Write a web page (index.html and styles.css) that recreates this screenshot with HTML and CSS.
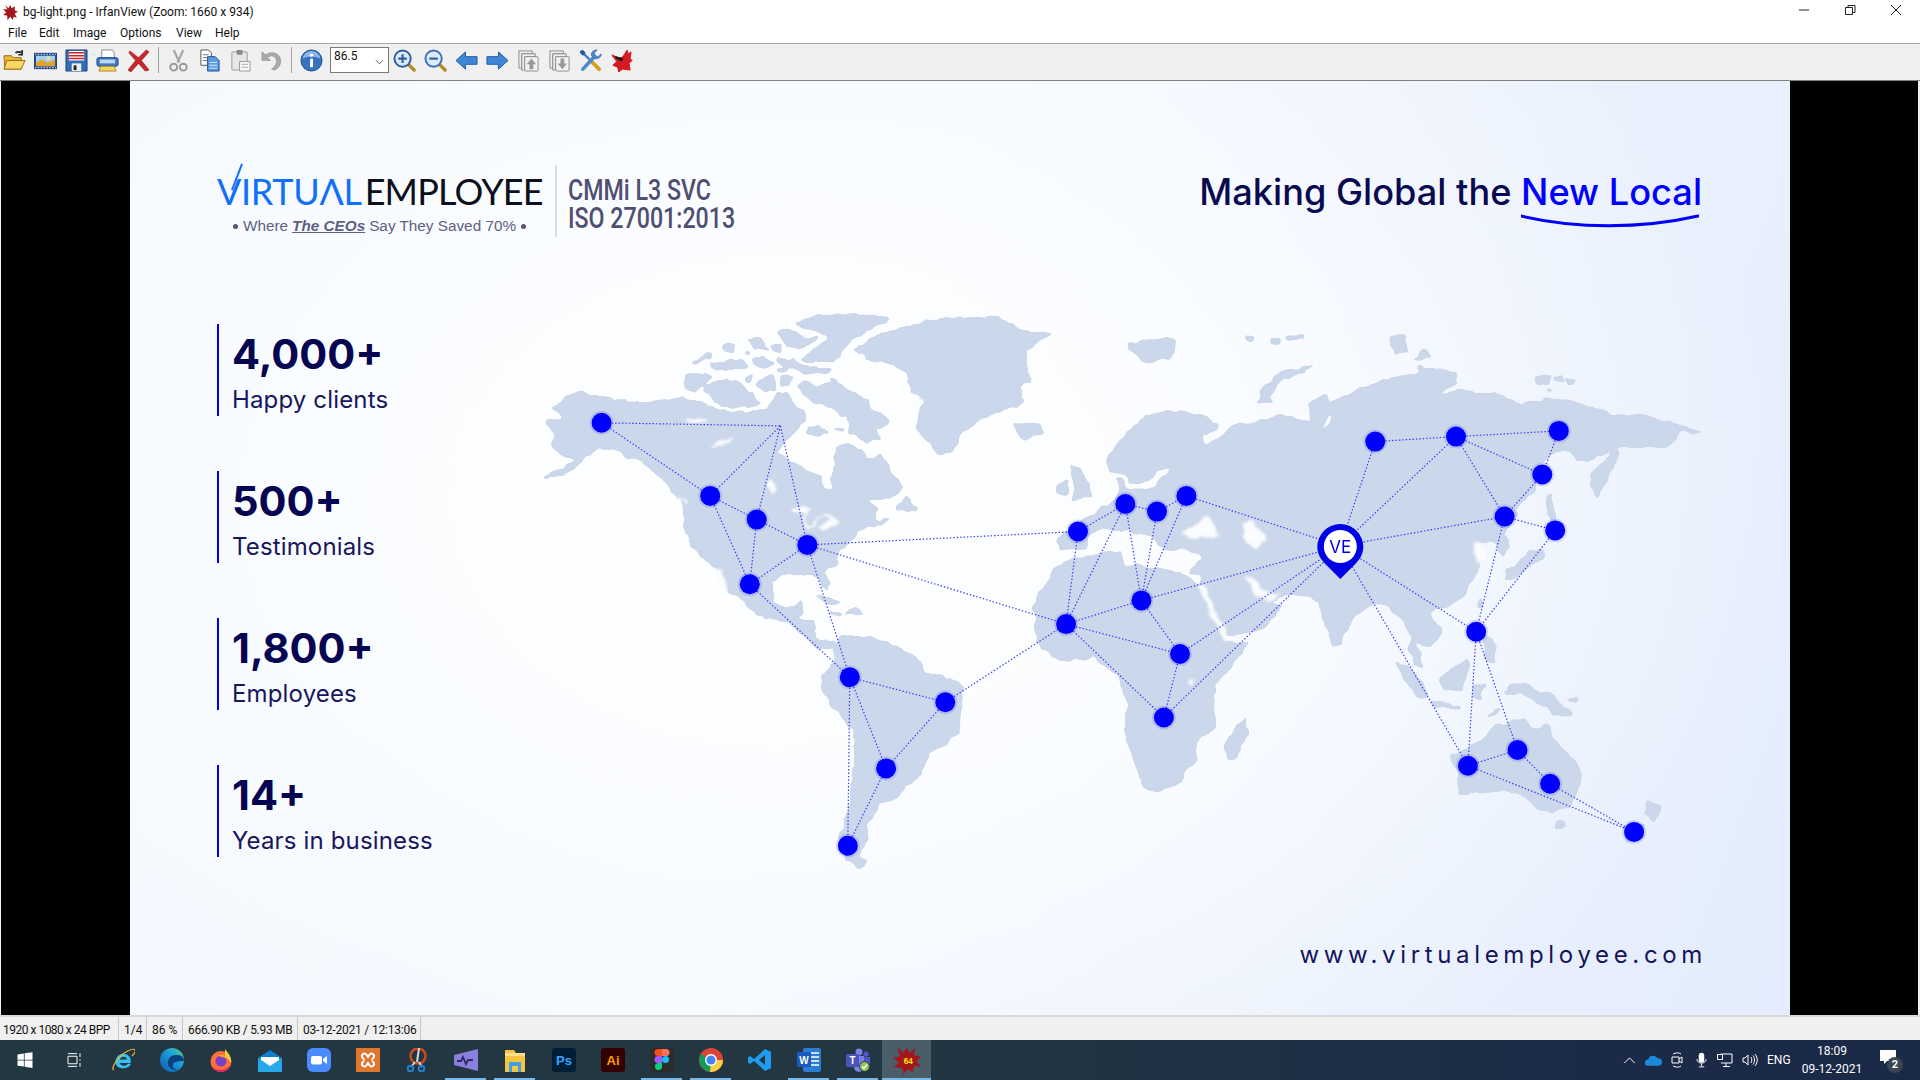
FILE: index.html
```html
<!DOCTYPE html>
<html lang="en">
<head>
<meta charset="utf-8">
<title>bg-light.png - IrfanView</title>
<link rel="stylesheet" href="styles.css">
</head>
<body>
<div class="app">
  <header class="window-head">
    <div class="caption">
      <svg class="app-icon" viewBox="0 0 16 16"><path fill="#a3161b" d="M3 1l3 3 2-3 1 3 3-2 0 4 3 1-3 2 2 4-3-1-1 3-2-3-3 3 0-4-4-1 3-2-3-3 4 0z"/></svg>
      <span class="caption-text">bg-light.png - IrfanView (Zoom: 1660 x 934)</span>
      <div class="win-controls">
        <svg viewBox="0 0 46 12"><path d="M0 6h10" stroke="#222" fill="none"/></svg>
        <svg viewBox="0 0 46 12"><path d="M.5 3.5h7v7h-7zM3 3V1.500h7v7H8" stroke="#222" fill="none"/></svg>
        <svg viewBox="0 0 46 12"><path d="M0 1l10 10M10 1L0 11" stroke="#222" fill="none"/></svg>
      </div>
    </div>
    <nav class="menu"><span>File</span><span>Edit</span><span>Image</span><span>Options</span><span>View</span><span>Help</span></nav>
  </header>

  <div class="toolbar">
    <svg class="tool" viewBox="0 0 24 24"><path d="M1 7h8l2 2h8v12H2z" fill="#e9b93a" stroke="#9a6d10"/><path d="M4 12h19l-4 9H1z" fill="#f8d766" stroke="#9a6d10"/><path d="M13 4c3-2 5-1 7 0M20 1v5h-4" stroke="#222" stroke-width="1.600" fill="none"/></svg>
    <svg class="tool" viewBox="0 0 24 24"><rect y="4" width="24" height="17" fill="#1c4486"/><rect x="2" y="7" width="20" height="11" fill="#a8d0ea"/><path d="M2 14l6-3 6 3 8-3v7H2z" fill="#e2a22f"/><circle cx="15" cy="9.500" r="1.800" fill="#ffe98a"/><path d="M1 5.500h22M1 19.500h22" stroke="#fff" stroke-dasharray="1.500 1.500"/></svg>
    <svg class="tool" viewBox="0 0 24 24"><path d="M1 1h22v22H1z" fill="#2f6db5" stroke="#1c4486"/><rect x="4" y="2" width="16" height="10" fill="#fff"/><path d="M4 4h16M4 7h16M4 10h16" stroke="#c9252b" stroke-width="1.500"/><rect x="7" y="15" width="10" height="8" fill="#eee"/><rect x="9" y="17" width="3" height="5" fill="#222"/></svg>
    <svg class="tool" viewBox="0 0 24 24"><path d="M6 1h11l2 3v6H6z" fill="#fff" stroke="#889"/><rect x="1" y="9" width="22" height="9" rx="2" fill="#3d79c4" stroke="#1c4486"/><rect x="4" y="11" width="16" height="4" fill="#bcd6f3"/><path d="M5 18h14l2 5H3z" fill="#f5d562" stroke="#a98a1f"/></svg>
    <svg class="tool" viewBox="0 0 24 24"><path d="M3 2l9 7 8-8 3 2-8 9 8 10-4 1-7-8-8 9-3-2 8-10-7-8z" fill="#c8262b" stroke="#8c1416" stroke-width=".6"/></svg>
    <i class="sep sep-a"></i>
    <svg class="tool" viewBox="0 0 24 24"><path d="M7 1l6 13M17 1l-6 13" stroke="#a8aaa8" stroke-width="2.400" fill="none"/><circle cx="7" cy="19" r="3.600" fill="none" stroke="#999" stroke-width="2"/><circle cx="17" cy="19" r="3.600" fill="none" stroke="#999" stroke-width="2"/></svg>
    <svg class="tool" viewBox="0 0 24 24"><path d="M3 1h8l3 3v13H3z" fill="#fff" stroke="#555"/><path d="M5 6h6M5 9h6M5 12h6" stroke="#777"/><path d="M10 8h8l4 4v11H10z" fill="#5a9be0" stroke="#1c4f95"/><path d="M12 14h8M12 17h8M12 20h8" stroke="#dcecff"/></svg>
    <svg class="tool" viewBox="0 0 24 24"><rect x="3" y="3" width="16" height="19" rx="1" fill="#e6e6e6" stroke="#999"/><rect x="8" y="1" width="6" height="5" fill="#888"/><path d="M11 13h11v10H11z" fill="#f7f7f7" stroke="#999"/><path d="M13 16h7M13 19h7" stroke="#aaa"/></svg>
    <svg class="tool" viewBox="0 0 24 24"><path d="M2 3v9h9L8 9c3-3 8-2 9 2 1 4-2 8-5 10l3 1c5-2 8-7 6-13-2-5-10-7-15-3z" fill="#a9a9a9" stroke="#8b8b8b" stroke-width=".6"/></svg>
    <i class="sep sep-b"></i>
    <svg class="tool" viewBox="0 0 24 24"><circle cx="12" cy="12" r="11" fill="#3672bd" stroke="#1d4a8f"/><path d="M3 10a9 8 0 0 1 18 0c-5-3-13-3-18 0z" fill="#8bb8e8"/><circle cx="12" cy="6.500" r="1.700" fill="#fff"/><rect x="10.500" y="10" width="3" height="9" fill="#fff"/></svg>
    <div class="combo"><span>86.5</span><svg viewBox="0 0 10 6"><path d="M1 1l4 4 4-4" fill="none" stroke="#555" stroke-width="1"/></svg></div>
    <svg class="tool" viewBox="0 0 24 24"><path d="M15 15l7 7" stroke="#b38a2c" stroke-width="3.600" stroke-linecap="round"/><circle cx="10" cy="10" r="8.500" fill="#dceafa" stroke="#2f5c9e" stroke-width="2"/><path d="M5.500 10h9M10 5.500v9" stroke="#2f5c9e" stroke-width="2.200"/></svg>
    <svg class="tool" viewBox="0 0 24 24"><path d="M15 15l7 7" stroke="#b38a2c" stroke-width="3.600" stroke-linecap="round"/><circle cx="10" cy="10" r="8.500" fill="#dceafa" stroke="#3b71b8" stroke-width="2"/><path d="M5.500 10h9" stroke="#2f5c9e" stroke-width="2.200"/></svg>
    <svg class="tool" viewBox="0 0 24 24"><path d="M1 12l10-9v5h12v8H11v5z" fill="#3f86d6" stroke="#1d5aa5"/></svg>
    <svg class="tool" viewBox="0 0 24 24"><path d="M23 12l-10-9v5H1v8h12v5z" fill="#3f86d6" stroke="#1d5aa5"/></svg>
    <svg class="tool" viewBox="0 0 24 24"><path d="M2 2h14v3H5v15H2z" fill="#eee" stroke="#8b8b8b"/><path d="M5 5h14v3H8v14H5z" fill="#eee" stroke="#8b8b8b"/><rect x="8" y="8" width="14" height="15" rx="1" fill="#f2f2f2" stroke="#8b8b8b"/><path d="M15 10l5 6h-3v5h-4v-5h-3z" fill="#9a9a9a"/></svg>
    <svg class="tool" viewBox="0 0 24 24"><path d="M2 2h14v3H5v15H2z" fill="#eee" stroke="#8b8b8b"/><path d="M5 5h14v3H8v14H5z" fill="#eee" stroke="#8b8b8b"/><rect x="8" y="8" width="14" height="15" rx="1" fill="#f2f2f2" stroke="#8b8b8b"/><path d="M15 21l5-6h-3v-5h-4v5h-3z" fill="#9a9a9a"/></svg>
    <svg class="tool" viewBox="0 0 24 24"><path d="M3 3l9 9" stroke="#3c78c2" stroke-width="2.400" fill="none"/><path d="M1 2l3-1 3 3-3 3-3-3z" fill="#1d5aa5"/><path d="M12 12l9 9" stroke="#d39e21" stroke-width="4" stroke-linecap="round"/><path d="M4 21L16 8" stroke="#4b8ad2" stroke-width="3.800" stroke-linecap="round"/><path d="M23 5l-3 3-3-1-1-3 3-3c-3-.5-7 2-6 6l3 3c4 1 8-2 7-5z" fill="#4b8ad2" stroke="#1d5aa5" stroke-width=".6"/></svg>
    <svg class="tool" viewBox="0 0 24 24"><path d="M2 6l6 3 4 0 2-2 4-6 1 4 3-2-1 7 2 2-3 3 1 7-8-1-4 3-1-5-5-2 4-4-4-5z" fill="#d31c22" stroke="#d31c22" stroke-linejoin="round"/><path d="M5 7l9 3-2 3-6-3z" fill="#1c1c1c"/></svg>
  </div>

  <main class="viewer">
    <div class="slide">
      <div class="slide-head">
        <div class="logo">
          <div class="wordmark"><span class="wm-virtual"><span class="wm-v">V</span>IRTUΛL</span><span class="wm-employee">EMPLOYEE</span></div>
          <div class="tagline"><i class="dot"></i>Where <b>The CEOs</b> Say They Saved 70%<i class="dot"></i></div>
        </div>
        <div class="certs">
          <div class="certs-inner">
            <div>CMMi L3 SVC</div>
            <div>ISO 27001:2013</div>
          </div>
        </div>
        <div class="motto">
          Making Global the <span class="motto-hl">New Local<svg class="swoosh" viewBox="0 0 178 14"><path d="M0 2c55 13 120 13 177 0" fill="none" stroke="#0000ff" stroke-width="3" stroke-linecap="round"/></svg></span>
        </div>
      </div>

      <div class="slide-body">
        <ul class="stats">
          <li><strong>4,000+</strong><span>Happy clients</span></li>
          <li><strong>500+</strong><span>Testimonials</span></li>
          <li><strong>1,800+</strong><span>Employees</span></li>
          <li><strong>14+</strong><span>Years in business</span></li>
        </ul>

        <svg class="map" viewBox="520 300 1200 600">
          <defs>
            <filter id="coast" filterUnits="userSpaceOnUse" x="520" y="300" width="1200" height="600" color-interpolation-filters="sRGB">
              <feTurbulence type="fractalNoise" baseFrequency=".09" numOctaves="3" seed="4" result="n"/>
              <feDisplacementMap in="SourceGraphic" in2="n" scale="7" xChannelSelector="R" yChannelSelector="G" result="d"/>
              <feGaussianBlur in="d" stdDeviation=".9" result="b"/>
              <feComponentTransfer in="b"><feFuncA type="linear" slope="5" intercept="-2"/></feComponentTransfer>
            </filter>
          </defs>
          <g filter="url(#coast)">
          <g transform="translate(520 300) scale(.40816 .38265)">
            <path class="land" d="M64 316L110 312L82 285L105 255L148 240L175 250L240 258L295 272L340 262L395 258L445 268L480 285L520 294L570 290L600 290L612 268L632 240L650 250L665 270L695 290L698 318L672 345L650 372L630 398L665 425L700 442L738 460L745 498L768 495L758 470L770 440L773 385L800 375L840 388L850 418L880 405L905 435L922 465L942 490L920 512L885 520L850 522L838 535L860 530L875 545L870 580L905 572L895 580L830 600L815 625L785 650L775 690L748 712L755 745L748 760L730 722L700 716L640 720L615 740L620 785L640 800L665 808L692 785L695 815L680 830L720 840L730 888L768 893L770 908L728 906L700 885L655 838L600 835L570 812L540 780L510 762L480 700L450 680L420 640L400 590L400 530L375 505L340 460L300 425L240 395L190 385L150 425L110 455L55 466L105 440L140 415L100 405L72 380L88 352L64 332Z"/>
            <path class="hole" d="M402 314L430 308L458 312L455 320L420 322ZM465 380L490 368L522 358L518 368L490 380L468 384ZM605 475L618 470L630 500L618 507L605 490ZM665 550L690 533L715 545L700 555L700 585L710 590L750 558L785 582L735 602L730 590L760 575L745 565L705 600L695 590L695 560L668 556ZM482 698L495 705L510 762L495 750L480 720ZM378 508L412 522L410 530L395 520Z"/>
            <path class="land" d="M682 225L695 210L725 225L770 215L810 240L855 262L860 285L905 310L905 325L870 340L880 360L850 375L810 345L800 305L770 285L740 272L720 270L700 255ZM705 330L730 330L755 350L720 355L702 352ZM770 340L795 335L790 345ZM780 295L805 292L805 302L785 302ZM450 225L480 210L530 210L560 240L590 272L555 282L490 280L465 250ZM405 205L415 192L470 200L430 238L405 235ZM420 160L470 138L468 152L430 165ZM497 118L525 115L520 135L500 135ZM558 105L585 100L610 130L575 125ZM615 118L640 115L645 135L622 135ZM552 135L565 132L565 142L555 142ZM466 165L500 158L540 155L560 170L550 180L500 188L470 180ZM568 155L600 150L625 170L600 180L575 170ZM630 150L670 155L710 175L765 180L755 192L690 192L660 178L630 165ZM632 178L655 175L655 185L635 188ZM585 205L620 198L625 235L600 240L580 220ZM640 198L672 198L660 222L638 222ZM550 200L568 198L560 215L550 210ZM630 238L655 245L685 290L655 285L630 262ZM760 205L780 210L775 218L760 212ZM680 60L730 40L880 38L908 50L860 75L810 105L790 135L765 160L720 165L690 155L720 130L760 95L700 75ZM630 85L655 72L700 100L730 95L700 125L670 130L640 105ZM920 545L945 510L975 545L945 555ZM720 775L750 775L790 795L760 795ZM790 820L820 800L848 822L800 822ZM758 815L785 818L785 824L760 822Z"/>
            <path class="land" d="M820 130L870 95L930 70L1040 48L1180 45L1230 85L1300 85L1240 135L1240 180L1250 205L1225 225L1235 265L1180 290L1130 310L1085 345L1055 400L1030 405L985 355L970 325L990 260L960 240L950 190L900 165L850 150ZM1205 325L1270 322L1285 345L1240 365L1215 345Z"/>
            <path class="hole" d="M958 268L985 258L978 280L960 278Z"/>
            <path class="land" d="M770 908L790 880L860 880L910 900L960 925L995 970L1050 990L1088 1010L1080 1060L1075 1130L1040 1165L1000 1185L985 1235L950 1270L925 1300L885 1320L855 1360L850 1410L830 1450L855 1472L830 1483L800 1465L785 1410L800 1340L815 1260L820 1190L815 1120L770 1070L740 1020L738 985L770 950Z"/>
          </g>
          <g transform="translate(1000 300) scale(.45918 .38265)">
            <path class="land" d="M125 620L165 590L215 550L252 525L262 490L252 470L265 465L272 490L300 497L335 490L375 440L392 435L345 445L322 470L300 482L280 480L270 450L240 450L232 425L240 400L275 350L310 310L360 290L420 295L475 325L472 340L440 352L445 378L480 362L505 325L540 325L580 312L612 295L680 320L670 270L710 250L722 290L695 350L725 320L722 265L770 240L830 210L910 190L915 172L990 190L998 215L940 250L1000 235L1100 250L1130 275L1190 258L1240 262L1310 285L1335 302L1420 305L1480 330L1530 345L1480 345L1465 380L1420 385L1340 385L1280 420L1255 420L1240 390L1200 400L1175 440L1168 490L1130 540L1120 570L1100 610L1110 640L1095 670L1075 630L1025 635L1045 665L1040 710L1010 770L975 800L930 815L960 860L950 890L930 910L895 880L880 840L840 795L800 800L770 830L750 870L745 905L725 905L705 840L695 790L670 770L625 770L590 790L610 800L580 855L500 880L480 850L445 770L435 745L440 720L410 715L440 680L440 665L400 650L360 655L330 620L300 610L265 605L220 595L190 615L190 650L130 655Z"/>
            <path class="land" d="M72 800L100 740L120 700L160 675L262 655L270 690L330 700L400 716L432 745L470 830L490 892L542 895L510 950L470 1000L465 1060L467 1120L430 1150L425 1200L385 1270L320 1285L290 1200L270 1120L282 1060L255 980L205 935L130 945L80 890Z"/>
            <path class="hole" d="M395 610L420 590L455 565L480 615L440 620L410 625ZM525 585L550 575L580 625L555 655L540 640ZM530 722L545 722L570 760L610 770L590 790L555 770ZM430 745L445 745L470 815L495 870L490 892L465 840ZM413 990L427 988L422 1005L413 1005ZM1028 638L1045 632L1060 665L1040 690Z"/>
            <path class="land" d="M535 1090L537 1130L515 1195L495 1200L488 1165L520 1110ZM150 430L175 440L200 510L155 525L165 490ZM125 480L150 470L145 505L122 505ZM280 115L340 100L380 105L375 150L320 165L300 140L280 135ZM560 265L570 230L610 190L685 170L610 215L585 250L595 270ZM530 95L550 92L550 106L535 106ZM590 95L608 100L610 115L592 115ZM620 98L660 92L660 102L625 108ZM850 95L880 92L893 135L865 138L848 122ZM897 155L925 130L940 150ZM1165 198L1200 195L1195 222L1168 215ZM1205 202L1225 200L1225 215L1208 212ZM1232 204L1252 208L1252 220L1235 218ZM1188 232L1205 235L1195 243ZM1290 450L1340 390L1347 398L1305 510L1298 515L1285 480ZM1190 505L1200 510L1212 590L1200 600L1190 560ZM1102 712L1130 680L1180 648L1188 668L1140 705L1115 730L1102 730ZM1045 775L1052 800L1040 808ZM1055 880L1075 890L1080 948L1055 935ZM895 885L915 910L920 960L905 950L892 915ZM860 948L885 955L925 1010L935 1035L915 1040L880 990ZM935 1047L1000 1060L1000 1068L945 1060ZM958 985L1015 938L1022 960L1005 1020L965 1018ZM1030 1005L1060 1000L1045 1030L1050 1045L1030 1040ZM1060 1085L1085 1065L1090 1070L1065 1090ZM1100 1020L1130 1020L1135 1030L1105 1030ZM1105 1005L1140 1000L1170 1022L1205 1030L1225 1060L1245 1080L1240 1088L1205 1080L1175 1055L1150 1035L1115 1022ZM1235 1045L1260 1035L1255 1055ZM980 1190L1050 1150L1080 1110L1140 1095L1165 1125L1190 1105L1215 1160L1260 1215L1265 1260L1240 1320L1200 1340L1170 1330L1130 1285L1050 1285L1000 1295L995 1230ZM1210 1365L1228 1362L1226 1380L1210 1382ZM1410 1305L1440 1325L1425 1365L1405 1340ZM1360 1382L1405 1370L1400 1400L1362 1417Z"/>
          </g>
          </g>
          <path class="link" d="M601.600 422.800L780.400 425.900M601.600 422.800L710.200 495.900M780.400 425.900L710.200 495.900M780.400 425.900L756.700 519.600M780.400 425.900L807.300 544.900M710.200 495.900L756.700 519.600M710.200 495.900L749.800 584.300M756.700 519.600L807.300 544.900M756.700 519.600L749.800 584.300M807.300 544.900L749.800 584.300M807.300 544.900L849.800 677.300M749.800 584.300L849.800 677.300M849.800 677.300L945.300 702.200M849.800 677.300L886.100 768.400M849.800 677.300L847.800 845.700M945.300 702.200L886.100 768.400M886.100 768.400L847.800 845.700M945.300 702.200L1066.100 624.100M807.300 544.900L1078 531.500M807.300 544.900L1066.100 624.100M1078 531.500L1125.400 504M1078 531.500L1066.100 624.100M1125.400 504L1066.100 624.100M1125.400 504L1157 511.600M1125.400 504L1141.400 600.400M1157 511.600L1141.400 600.400M1157 511.600L1186.400 495.900M1186.400 495.900L1141.400 600.400M1186.400 495.900L1340.300 546M1141.400 600.400L1066.100 624.100M1141.400 600.400L1180 654M1141.400 600.400L1340.300 546M1066.100 624.100L1180 654M1066.100 624.100L1163.900 717.500M1180 654L1163.900 717.500M1180 654L1340.300 546M1163.900 717.500L1340.300 546M1340.300 546L1375.200 441.600M1340.300 546L1456 436.600M1340.300 546L1504.600 516.600M1340.300 546L1476.200 631.800M1340.300 546L1467.900 765.700M1375.200 441.600L1456 436.600M1456 436.600L1558.800 430.900M1456 436.600L1542.300 474.500M1456 436.600L1504.600 516.600M1558.800 430.900L1542.300 474.500M1542.300 474.500L1504.600 516.600M1504.600 516.600L1555.200 530.400M1504.600 516.600L1476.200 631.800M1555.200 530.400L1476.200 631.800M1476.200 631.800L1467.900 765.700M1476.200 631.800L1517.500 750M1467.900 765.700L1517.500 750M1517.500 750L1550.100 783.700M1467.900 765.700L1634.100 831.900M1550.100 783.700L1634.100 831.900"/>
          <g class="nodes">
            <circle cx="601.600" cy="422.800" r="10"/><circle cx="710.200" cy="495.900" r="10"/><circle cx="756.700" cy="519.600" r="10"/><circle cx="807.300" cy="544.900" r="10"/><circle cx="749.800" cy="584.300" r="10"/><circle cx="849.800" cy="677.300" r="10"/><circle cx="945.300" cy="702.200" r="10"/><circle cx="886.100" cy="768.400" r="10"/><circle cx="847.800" cy="845.700" r="10"/><circle cx="1078" cy="531.500" r="10"/><circle cx="1125.400" cy="504" r="10"/><circle cx="1157" cy="511.600" r="10"/><circle cx="1186.400" cy="495.900" r="10"/><circle cx="1141.400" cy="600.400" r="10"/><circle cx="1066.100" cy="624.100" r="10"/><circle cx="1180" cy="654" r="10"/><circle cx="1163.900" cy="717.500" r="10"/><circle cx="1375.200" cy="441.600" r="10"/><circle cx="1456" cy="436.600" r="10"/><circle cx="1558.800" cy="430.900" r="10"/><circle cx="1542.300" cy="474.500" r="10"/><circle cx="1504.600" cy="516.600" r="10"/><circle cx="1555.200" cy="530.400" r="10"/><circle cx="1476.200" cy="631.800" r="10"/><circle cx="1467.900" cy="765.700" r="10"/><circle cx="1517.500" cy="750" r="10"/><circle cx="1550.100" cy="783.700" r="10"/><circle cx="1634.100" cy="831.900" r="10"/>
          </g>
          <path class="pin" d="M1340.300 524a23 23 0 0 1 23 23c0 9-6 15-10 19l-13 13-13-13c-4-4-10-10-10-19a23 23 0 0 1 23-23z"/>
          <circle class="pin-face" cx="1340.300" cy="546.500" r="16.500"/>
          <text class="pin-text" x="1340.300" y="552.500">VE</text>
        </svg>
      </div>

      <div class="site">www.virtualemployee.com</div>
    </div>
  </main>

  <div class="status">
    <span class="st-a">1920 x 1080 x 24 BPP</span><span class="st-b">1/4</span><span class="st-c">86 %</span><span class="st-d">666.90 KB / 5.93 MB</span><span class="st-e">03-12-2021 / 12:13:06</span>
  </div>

  <footer class="taskbar">
    <div class="task-icons">
      <div class="cell"><svg viewBox="0 0 24 24" class="ico-s"><path fill="#fff" d="M2 4.500l8.500-1.200V11.500H2zM11.500 3.100L22 1.600V11.500H11.500zM2 12.500h8.500v8.200L2 19.500zM11.500 12.500H22v10l-10.500-1.500z"/></svg></div>
      <div class="cell"><svg viewBox="0 0 24 24" class="ico-s"><path fill="none" stroke="#fff" stroke-width="1.300" d="M4 7h12v10H4zM4 3.500h12M4 20.500h12M20 3v5M20 11v2M20 16v5"/></svg></div>
      <div class="cell active-run"><svg viewBox="0 0 24 24"><path d="M4.500 13.500a7.800 7.800 0 0 1 15.200-2.500V15H8.800c.6 3.300 6 3.700 8.200.8h2.900c-2 6.200-15.400 6.500-15.400-2.300zM8.800 11.500h7.300c-.9-3.700-6.300-3.700-7.300 0z" fill="#36bff0" fill-rule="evenodd"/><path d="M3 21.500c-3 .5 0-6 5-12 5-5.500 14-10 16-7.500 1 2-2 5-3 6" fill="none" stroke="#e8b92e" stroke-width="1.200"/></svg></div>
      <div class="cell"><svg viewBox="0 0 24 24"><defs><linearGradient id="edgeA" x1="0" y1="1" x2="1" y2="0"><stop offset="0" stop-color="#0c59a4"/><stop offset=".6" stop-color="#1b9de2"/><stop offset="1" stop-color="#56d470"/></linearGradient></defs><circle cx="12" cy="12" r="12" fill="url(#edgeA)"/><path d="M24 13c0-5-4-6-8-6-6 0-9 5-8 9 1 5 6 7 11 6-5 0-7-3-6-6 1-2 4-3 11-3z" fill="#0c3f7e"/></svg></div>
      <div class="cell"><svg viewBox="0 0 24 24"><circle cx="12" cy="13.500" r="10.500" fill="#ff7139"/><path d="M16 1c2 3 7 7 6 14-2-3-3-4-6-6z" fill="#ffc93f"/><path d="M3 18c4 5 13 6 18-1-1 5-5 7-9 7-4 0-7-2-9-6z" fill="#e3246b"/><circle cx="12" cy="13" r="5.500" fill="#7b3ec7"/><path d="M9 8c3-3 8-1 8 3-2-2-5-2-8-3z" fill="#ff9a2c"/></svg></div>
      <div class="cell"><svg viewBox="0 0 24 24"><path d="M0 10L12 2l12 8v14H0z" fill="#0f7fcf"/><path d="M3 9h18v8l-9 5-9-5z" fill="#fff"/><path d="M0 10l12 8 12-8v14H0z" fill="#28a8ea"/></svg></div>
      <div class="cell"><svg viewBox="0 0 24 24"><rect width="24" height="24" rx="6" fill="#4a8cff"/><rect x="4" y="8" width="11" height="8.500" rx="2" fill="#fff"/><path d="M16 11l4-3v8l-4-3z" fill="#fff"/></svg></div>
      <div class="cell"><svg viewBox="0 0 24 24"><rect width="24" height="24" fill="#e0762c"/><path d="M7 6c3-2 4 2 5 3 1-1 2-5 5-3 3 2-1 6-2 6 1 0 5 4 2 6-3 2-4-2-5-3-1 1-2 5-5 3-3-2 1-6 2-6-1 0-5-4-2-6z" fill="none" stroke="#fff" stroke-width="2"/></svg></div>
      <div class="cell"><svg viewBox="0 0 24 24"><circle cx="13" cy="8" r="7.500" fill="none" stroke="#d04a1d" stroke-width="2.400"/><path d="M14 0l-2 14M10 14l-4 5M14 14l3 5" stroke="#d8d8d8" stroke-width="2"/><circle cx="5.500" cy="20.500" r="2.800" fill="none" stroke="#1f7fce" stroke-width="2"/><circle cx="16.500" cy="20.500" r="2.800" fill="none" stroke="#1f7fce" stroke-width="2"/></svg></div>
      <div class="cell"><svg viewBox="0 0 24 24"><path d="M0 7L24 1v22L0 17z" fill="#8a7fe0"/><path d="M3 13h4l2-4 3 7 2-4h5" fill="none" stroke="#2d2a66" stroke-width="1.800"/></svg></div>
      <div class="cell"><svg viewBox="0 0 24 24"><path d="M2 2h9l2 3h9v19H2z" fill="#f5c443"/><rect x="2" y="5" width="20" height="3" fill="#ffe08a"/><path d="M6 14h12v10h-3v-6H9v6H6z" fill="#3fa0e6"/><rect x="9" y="18" width="6" height="6" fill="#f5c443"/></svg></div>
      <div class="cell"><svg viewBox="0 0 24 24"><rect width="24" height="24" rx="3" fill="#001e36"/><text x="12" y="17" class="ico-text ps">Ps</text></svg></div>
      <div class="cell"><svg viewBox="0 0 24 24"><rect width="24" height="24" rx="3" fill="#330000"/><text x="12" y="17" class="ico-text ai">Ai</text></svg></div>
      <div class="cell"><svg viewBox="0 0 24 24"><rect width="24" height="24" rx="3" fill="#2c2c2c"/><path d="M8 1h4v7H8a3.500 3.500 0 0 1 0-7z" fill="#f24e1e"/><path d="M12 1h4a3.500 3.500 0 0 1 0 7h-4z" fill="#ff7262"/><path d="M8 8h4v7H8a3.500 3.500 0 0 1 0-7z" fill="#a259ff"/><circle cx="15.500" cy="11.500" r="3.500" fill="#1abcfe"/><path d="M8 15h4v3.500A3.500 3.500 0 1 1 8 15z" fill="#0acf83"/></svg></div>
      <div class="cell"><svg viewBox="0 0 24 24"><circle cx="12" cy="12" r="12" fill="#db4437"/><path d="M12 12L2 6A12 12 0 0 0 12 24z" fill="#0f9d58"/><path d="M12 12l-1 12A12 12 0 0 0 24 12z" fill="#ffcd40"/><circle cx="12" cy="12" r="6" fill="#fff"/><circle cx="12" cy="12" r="4.600" fill="#4285f4"/></svg></div>
      <div class="cell"><svg viewBox="0 0 24 24"><path d="M17 1l6 3v16l-6 3L6 13l-4 3-2-1.500V9.500L2 8l4 3zM17 7l-6 5 6 5z" fill="#1f9cf0"/></svg></div>
      <div class="cell"><svg viewBox="0 0 24 24"><rect x="6" y="0" width="18" height="24" rx="2" fill="#2b7cd3"/><path d="M14 5h8M14 9h8M14 13h8M14 17h8" stroke="#fff" stroke-width="1.400"/><rect y="4" width="14" height="15" rx="1" fill="#185abd"/><text x="7" y="16" class="ico-text wd">W</text></svg></div>
      <div class="cell"><svg viewBox="0 0 24 24"><circle cx="13" cy="4" r="3.500" fill="#7b83eb"/><circle cx="20" cy="6" r="2.600" fill="#5059c9"/><path d="M16 9h8v8c0 3-3 4-6 3z" fill="#5059c9"/><path d="M8 8h10v11a5 5 0 0 1-10 0z" fill="#7b83eb"/><rect y="6" width="13" height="13" rx="1.500" fill="#4b53bc"/><text x="6.500" y="16" class="ico-text tm">T</text><circle cx="18.500" cy="18.500" r="5" fill="#92c353" stroke="#223640"/><path d="M16 18.500l2 2 3-4" fill="none" stroke="#fff" stroke-width="1.300"/></svg></div>
      <div class="cell cell-on"><svg class="ico-l" viewBox="0 0 24 24"><path d="M4 1l5 5 3-5 2 5 5-4-1 6 6 1-4 4 4 5-6-1-1 6-4-3-4 4-1-5-7-1 4-4-5-4 6-1z" fill="#a3161b"/><text x="13" y="15" class="ico-text irf">64</text></svg></div>
    </div>
    <div class="tray">
      <svg class="t-chev" viewBox="0 0 14 8"><path d="M1 7l6-6 6 6" fill="none" stroke="#fff" stroke-width="1.100"/></svg>
      <svg class="t-cloud" viewBox="0 0 16 10"><path d="M3 10a3 3 0 0 1 0-6 5 5 0 0 1 9-1 3.500 3.500 0 0 1 1 7z" fill="#1e88d8"/></svg>
      <svg class="t-cam" viewBox="0 0 12 16"><path d="M1 5h7v6H1zM8 7l3-2v6l-3-2M2 2c3-1.500 6-1.500 8 0M2 14c3 1.500 6 1.500 8 0" fill="none" stroke="#fff"/></svg>
      <svg class="t-mic" viewBox="0 0 12 16"><rect x="3" y="0" width="6" height="11" rx="3" fill="#fff"/><path d="M1 7c0 6 10 6 10 0M6 12v3M3 15.500h6" fill="none" stroke="#fff"/></svg>
      <svg class="t-net" viewBox="0 0 16 14"><path d="M4 1h11v9H4M9 10v3M6 13.500h7M.5 1.500h5v5h-5z" fill="none" stroke="#fff"/></svg>
      <svg class="t-vol" viewBox="0 0 16 14"><path d="M1 5h2l3-3v10l-3-3H1zM9 4c1 2 1 4 0 6M11 2.500c2 3 2 6 0 9M13 1c3 4 3 8 0 12" fill="none" stroke="#fff"/></svg>
      <span class="t-lang">ENG</span>
      <div class="t-clock"><div>18:09</div><div>09-12-2021</div></div>
      <div class="t-note"><svg viewBox="0 0 16 14"><path d="M0 0h16v11H7l-3 3v-3H0z" fill="#fff"/></svg><span class="t-badge">2</span></div>
    </div>
  </footer>
</div>
</body>
</html>
```

FILE: styles.css
```css
* { box-sizing: border-box; }
html, body { margin: 0; padding: 0; }
body { font-family: Roboto, "Liberation Sans", sans-serif; background: #000; }
ul { list-style: none; margin: 0; padding: 0; }

.app { width: 1920px; height: 1080px; display: flex; flex-direction: column; overflow: hidden; }

/* window chrome */
.window-head { height: 43px; background: #fff; color: #111; font-size: 12px; }
.caption { height: 24px; display: flex; align-items: center; padding-left: 2px; }
.app-icon { width: 17px; height: 17px; margin-right: 4px; }
.win-controls { margin-left: auto; margin-right: -17px; display: flex; transform: translateY(-2px); }
.win-controls svg { width: 46px; height: 12px; }
.menu { height: 19px; display: flex; align-items: center; padding: 0 0 2px 8px; }
.menu span:nth-child(1) { width: 31px; }
.menu span:nth-child(2) { width: 34px; }
.menu span:nth-child(3) { width: 47px; }
.menu span:nth-child(4) { width: 56px; }
.menu span:nth-child(5) { width: 39px; }

.toolbar { height: 38px; background: #f0f0f0; border-top: 1px solid #a8a8a8; border-bottom: 1px solid #808080; display: flex; align-items: center; padding: 0 0 4px 3px; }
.tool { width: 23px; height: 23px; margin-right: 8px; flex: none; }
.sep { width: 1px; height: 26px; background: #a0a0a0; flex: none; }
.sep-a { margin-right: 8px; }
.sep-b { margin-right: 8px; }
.combo { width: 59px; height: 26px; background: #fff; border: 1px solid #7a7a7a; flex: none; display: flex; font-size: 12px; padding: 1px 0 0 3px; margin: 0 4px 0 -1px; color: #111; position: relative; }
.combo svg { width: 9px; height: 6px; position: absolute; right: 4px; top: 11px; }

/* viewer */
.viewer { height: 934px; background: #000; padding: 0 130px; position: relative; border-left: 1px solid #f0f0f0; flex: none; }
.viewer::after { content: ""; position: absolute; right: 0; top: 0; bottom: 0; width: 2px; background: #f0f0f0; }
.slide { width: 1660px; height: 934px; margin-left: -1px; display: flex; flex-direction: column; padding: 0 0 0 87px;
  background:
    radial-gradient(1000px 720px at 40% 45%, #ffffff 0%, rgba(251,253,255,.9) 45%, rgba(248,251,255,0) 100%),
    linear-gradient(110deg, #f4f8fe 0%, #f2f6fe 45%, #e4edfd 100%); }

.slide-head { height: 219px; padding: 82px 88px 0 0; display: flex; align-items: flex-start; flex: none; }
.logo { width: 338px; flex: none; }
.wordmark { font-family: "Lato", sans-serif; font-size: 36px; line-height: 44px; font-weight: 400; white-space: nowrap; letter-spacing: -.3px; padding-top: 6px; }
.wm-virtual { color: #1170fb; }
.wm-employee { color: #0c0f1c; margin-left: 3px; letter-spacing: -.8px; }
.wm-v { position: relative; }
.wm-v::after { content: ""; position: absolute; width: 2px; height: 28px; background: #1170fb; left: 19px; top: -6px; transform: rotate(21deg); }
.tagline { font-family: "Liberation Sans", sans-serif; font-size: 15.300px; line-height: 18px; color: #5f5f84; padding-left: 16px; margin-top: 4px; white-space: nowrap; display: flex; align-items: center; }
.tagline b { font-style: italic; text-decoration: underline; margin: 0 4px; }
.dot { width: 5px; height: 5px; border-radius: 50%; background: #55557a; margin: 1px 5px 0 0; flex: none; }
.dot:last-child { margin: 1px 0 0 5px; }

.certs { height: 72px; padding: 11px 0 0 11px; width: 240px; flex: none; margin-top: 2px; border-left: 2px solid #d8dce6; }
.certs-inner { font-family: Roboto, sans-serif; font-weight: 500; color: #4f4f72; font-size: 29px; line-height: 28px; white-space: nowrap; transform: scaleX(.8); transform-origin: left center; }

.motto { margin-left: auto; font-family: Inter, sans-serif; font-weight: 500; font-size: 36.200px; line-height: 44px; color: #0a0a50; white-space: nowrap; padding-top: 7px; }
.motto-hl { color: #0000ff; position: relative; display: inline-block; }
.swoosh { position: absolute; left: 0; top: 44px; width: 178px; height: 14px; }

.slide-body { display: flex; flex: none; height: 600px; }
.stats { width: 303px; padding-top: 24px; display: flex; flex-direction: column; gap: 55px; flex: none; font-family: Inter, sans-serif; }
.stats li { height: 92px; border-left: 2px solid #0000ee; padding: 1px 0 0 13px; display: flex; flex-direction: column; }
.stats strong { font-size: 41.500px; line-height: 58px; font-weight: 700; color: #050551; }
.stats span { font-size: 24px; line-height: 33px; color: #17175e; letter-spacing: .15px; }
.map { width: 1200px; height: 600px; flex: none; }
.land { fill: #cbd7ea; stroke: #cbd7ea; stroke-width: 3; stroke-linejoin: round; }
.hole { fill: #fafcff; }
.link { fill: none; stroke: #3434ff; stroke-width: 1.200; stroke-dasharray: 1.400 2; }
.nodes circle { fill: #0000ff; stroke: rgba(0,0,255,.13); stroke-width: 4; }
.pin { fill: #0000e6; }
.pin-face { fill: #fff; }
.pin-text { font-family: Inter, sans-serif; font-size: 17px; fill: #0000e6; text-anchor: middle; }

.site { font-family: Inter, sans-serif; font-size: 24px; letter-spacing: 4.650px; color: #14145a; text-align: right; padding-right: 83px; margin-top: 40px; line-height: 30px; }

/* status bar */
.status { height: 25px; flex: none; background: #f0f0f0; border-top: 2px solid #d9d9d9; display: flex; font-size: 12px; color: #111; align-items: stretch; line-height: 26px; overflow: hidden; }
.status span { border-right: 1px solid #c8c8c8; padding-left: 5px; white-space: nowrap; }
.status .st-a { width: 119px; padding-left: 3px; letter-spacing: -.5px; }
.st-b { width: 28px; }
.st-c { width: 36px; }
.st-d { width: 115px; letter-spacing: -.3px; }
.st-e { width: 123px; letter-spacing: -.2px; }

/* taskbar */
.taskbar { height: 40px; flex: none; display: flex; justify-content: space-between; background: linear-gradient(90deg, #223741 0%, #223741 45%, #1a2a47 85%, #1a2947 100%); color: #fff; }
.task-icons { display: flex; }
.cell { width: 49px; height: 40px; display: flex; align-items: center; justify-content: center; position: relative; flex: none; }
.cell svg { width: 24px; height: 24px; }
.cell .ico-s { width: 18px; height: 18px; }
.cell .ico-l { width: 28px; height: 28px; }
.cell:nth-child(10)::after, .cell:nth-child(11)::after, .cell:nth-child(14)::after, .cell:nth-child(15)::after, .cell:nth-child(17)::after, .cell:nth-child(18)::after, .cell-on::after { content: ""; position: absolute; left: 4px; right: 4px; bottom: 0; height: 2px; background: #76b9ed; }
.cell-on { background: #4a5d68; }
.cell-on::after { left: 0; right: 0; }
.ico-text { font-family: "Liberation Sans", sans-serif; font-weight: 700; text-anchor: middle; }
.ps { font-size: 13px; fill: #31a8ff; }
.ai { font-size: 13px; fill: #ff9a00; }
.wd { font-size: 10px; fill: #fff; }
.tm { font-size: 10px; fill: #fff; }
.irf { font-size: 7px; fill: #ffe600; }

.tray { display: flex; align-items: center; position: relative; width: 306px; }
.tray svg { flex: none; }
.t-chev { width: 13px; height: 7px; margin-left: 9px; }
.t-cloud { width: 17px; height: 11px; margin-left: 9px; }
.t-cam { width: 12px; height: 16px; margin-left: 9px; }
.t-mic { width: 11px; height: 16px; margin-left: 13px; }
.t-net { width: 16px; height: 14px; margin-left: 10px; }
.t-vol { width: 16px; height: 14px; margin-left: 9px; }
.t-lang { font-size: 12px; margin-left: 9px; width: 26px; }
.t-clock { font-size: 12px; line-height: 18px; text-align: center; width: 66px; margin-left: 6px; }
.t-note { position: relative; width: 16px; height: 14px; margin-left: 15px; margin-top: -7px; }
.t-note svg { width: 16px; height: 14px; display: block; }
.t-badge { position: absolute; left: 7px; top: 7px; width: 16px; height: 16px; border-radius: 50%; background: #3b4452; font-size: 11px; font-weight: 700; line-height: 16px; text-align: center; }
```
